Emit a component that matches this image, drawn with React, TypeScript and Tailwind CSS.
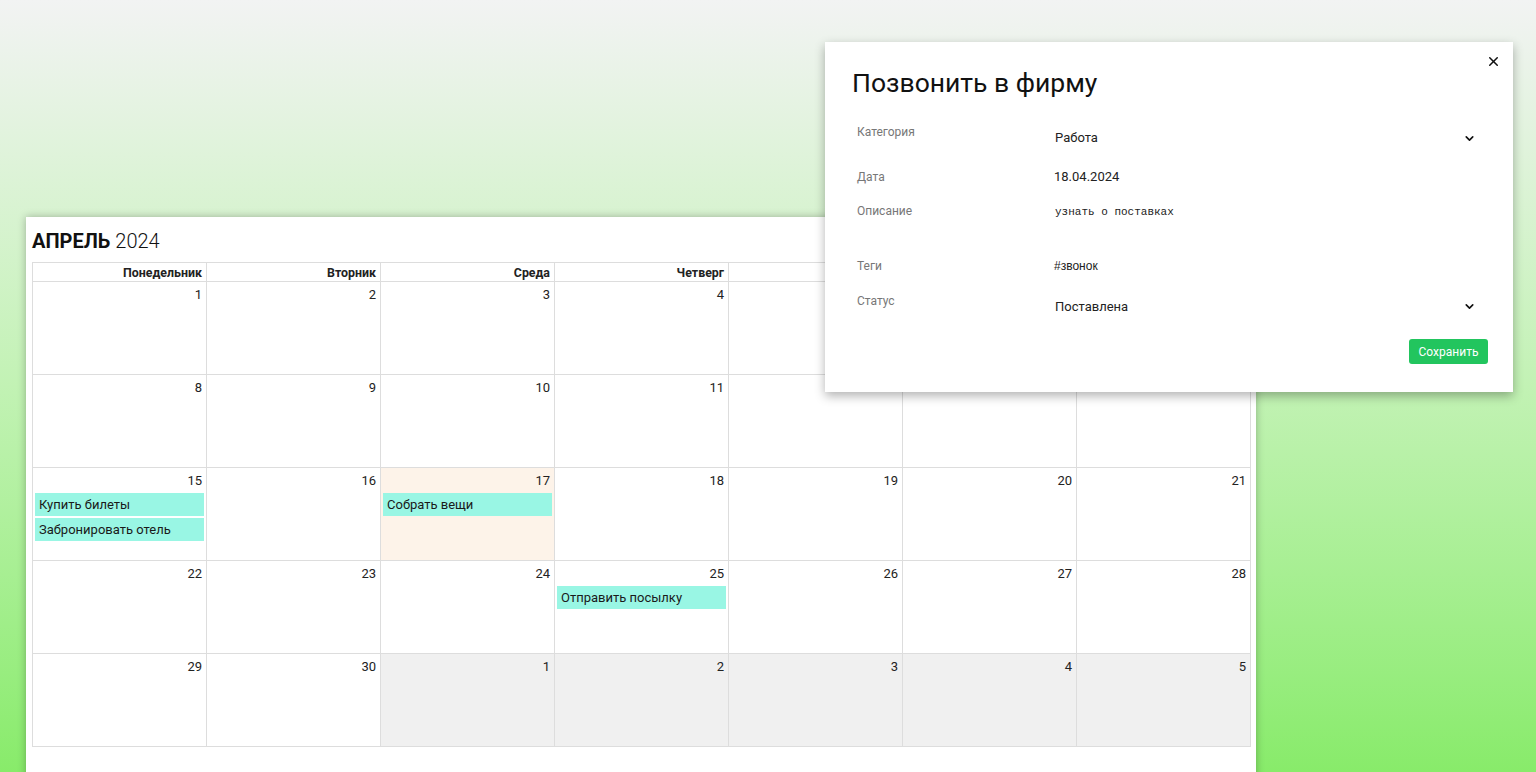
import { ChevronDown, X } from 'lucide-react';

type Ev = { title: string };
type Day = { n: number; other?: boolean; today?: boolean; events?: Ev[] };

const WEEKDAYS = ['Понедельник', 'Вторник', 'Среда', 'Четверг', 'Пятница', 'Суббота', 'Воскресенье'];

const EVENTS: Record<number, Ev[]> = {
    15: [{ title: 'Купить билеты' }, { title: 'Забронировать отель' }],
    17: [{ title: 'Собрать вещи' }],
    25: [{ title: 'Отправить посылку' }],
};

const weeks: Day[][] = (() => {
    const rows: Day[][] = [];
    let d = 1;
    for (let w = 0; w < 5; w++) {
        const row: Day[] = [];
        for (let i = 0; i < 7; i++) {
            if (d <= 30) {
                row.push({ n: d, today: d === 17, events: EVENTS[d] });
            } else {
                row.push({ n: d - 30, other: true });
            }
            d++;
        }
        rows.push(row);
    }
    return rows;
})();

const Calendar = () => (
    <div className="w-[1230px] bg-white pb-[40px] pl-[6px] pt-[11px] shadow-[0_0_8px_rgba(0,0,0,0.28)]">
        <h2 className="text-[20px] leading-[26px] text-[#111]">
            <span className="font-bold">АПРЕЛЬ</span> <span className="font-light">2024</span>
        </h2>
        <table className="mt-[8px] w-[1219px] table-fixed border-collapse text-[13px] text-[#222]">
            <thead>
                <tr>
                    {WEEKDAYS.map((w) => (
                        <th key={w} className="h-[19px] border border-[#ddd] px-[4px] text-right text-[12.4px] font-bold leading-[17px]">
                            {w}
                        </th>
                    ))}
                </tr>
            </thead>
            <tbody>
                {weeks.map((row, i) => (
                    <tr key={i}>
                        {row.map((day) => (
                            <td
                                key={`${i}-${day.n}`}
                                className={`h-[93px] border border-[#ddd] p-0 align-top ${
                                    day.other ? 'bg-[#f0f0f0]' : day.today ? 'bg-[#fdf3e9]' : 'bg-white'
                                }`}
                            >
                                <div className="px-[4px] pt-[4px] text-right leading-[17px]">{day.n}</div>
                                {day.events && (
                                    <div className="mt-[4px] flex flex-col gap-[2px] px-[2px]">
                                        {day.events.map((e) => (
                                            <div key={e.title} className="bg-[#99f6e4] px-[4px] py-[3px] leading-[17px] text-[#1a1a1a]">
                                                {e.title}
                                            </div>
                                        ))}
                                    </div>
                                )}
                            </td>
                        ))}
                    </tr>
                ))}
            </tbody>
        </table>
    </div>
);

const Label = ({ children, pt }: { children: string; pt: string }) => (
    <div className={`w-[198px] shrink-0 text-[12px] leading-[16px] text-[#777] ${pt}`}>{children}</div>
);

const Modal = () => (
    <div className="absolute left-[825px] top-[42px] h-[350px] w-[688px] bg-white shadow-[0_4px_10px_rgba(0,0,0,0.3)]">
        <button className="absolute right-[12px] top-[12px] text-[#111]">
            <X size={15} strokeWidth={2.4} />
        </button>
        <h1 className="pl-[27px] pt-[24px] text-[26.5px] leading-[34px] text-[#111]">Позвонить в фирму</h1>

        <div className="mr-[31px] ml-[32px] mt-[19px]">
            <div className="flex h-[36px] items-start">
                <Label pt="pt-[5px]">Категория</Label>
                <div className="flex h-[36px] flex-1 items-center justify-between pr-[6px] pt-[2px] text-[13px] text-[#222]">
                    <span>Работа</span>
                    <ChevronDown size={13} strokeWidth={3} className="text-[#111]" />
                </div>
            </div>
            <div className="mt-[9px] flex h-[24px] items-center pt-[2px]">
                <Label pt="pt-0">Дата</Label>
                <div className="-ml-[1px] text-[13px] text-[#222]">18.04.2024</div>
            </div>
            <div className="mt-[11px] flex h-[52px] items-start">
                <Label pt="pt-[4px]">Описание</Label>
                <div className="pt-[5px] font-['Liberation_Mono',monospace] text-[11px] leading-[16px] text-[#222]">
                    узнать о поставках
                </div>
            </div>
            <div className="mt-[5px] flex h-[20px] items-center">
                <Label pt="pt-0">Теги</Label>
                <div className="-ml-[1px] font-['Liberation_Sans',Arial,sans-serif] text-[12px] text-[#222]">#звонок</div>
            </div>
            <div className="mt-[12px] flex h-[36px] items-start">
                <Label pt="pt-[5px]">Статус</Label>
                <div className="flex h-[36px] flex-1 items-center justify-between pr-[6px] pt-[1px] text-[13px] text-[#222]">
                    <span>Поставлена</span>
                    <ChevronDown size={13} strokeWidth={3} className="text-[#111]" />
                </div>
            </div>
        </div>

        <div className="mr-[25px] mt-[15px] flex justify-end">
            <button className="h-[25px] w-[79px] rounded-[3px] bg-[#22c55e] text-[12px] text-white">Сохранить</button>
        </div>
    </div>
);

export default function App() {
    return (
        <div className="relative h-[772px] overflow-hidden bg-gradient-to-b from-[#f2f3f3] via-[#c2f2b4] to-[#88eb6a] font-['Roboto',sans-serif]">
            <div className="pl-[26px] pt-[217px]">
                <Calendar />
            </div>
            <Modal />
        </div>
    );
}
